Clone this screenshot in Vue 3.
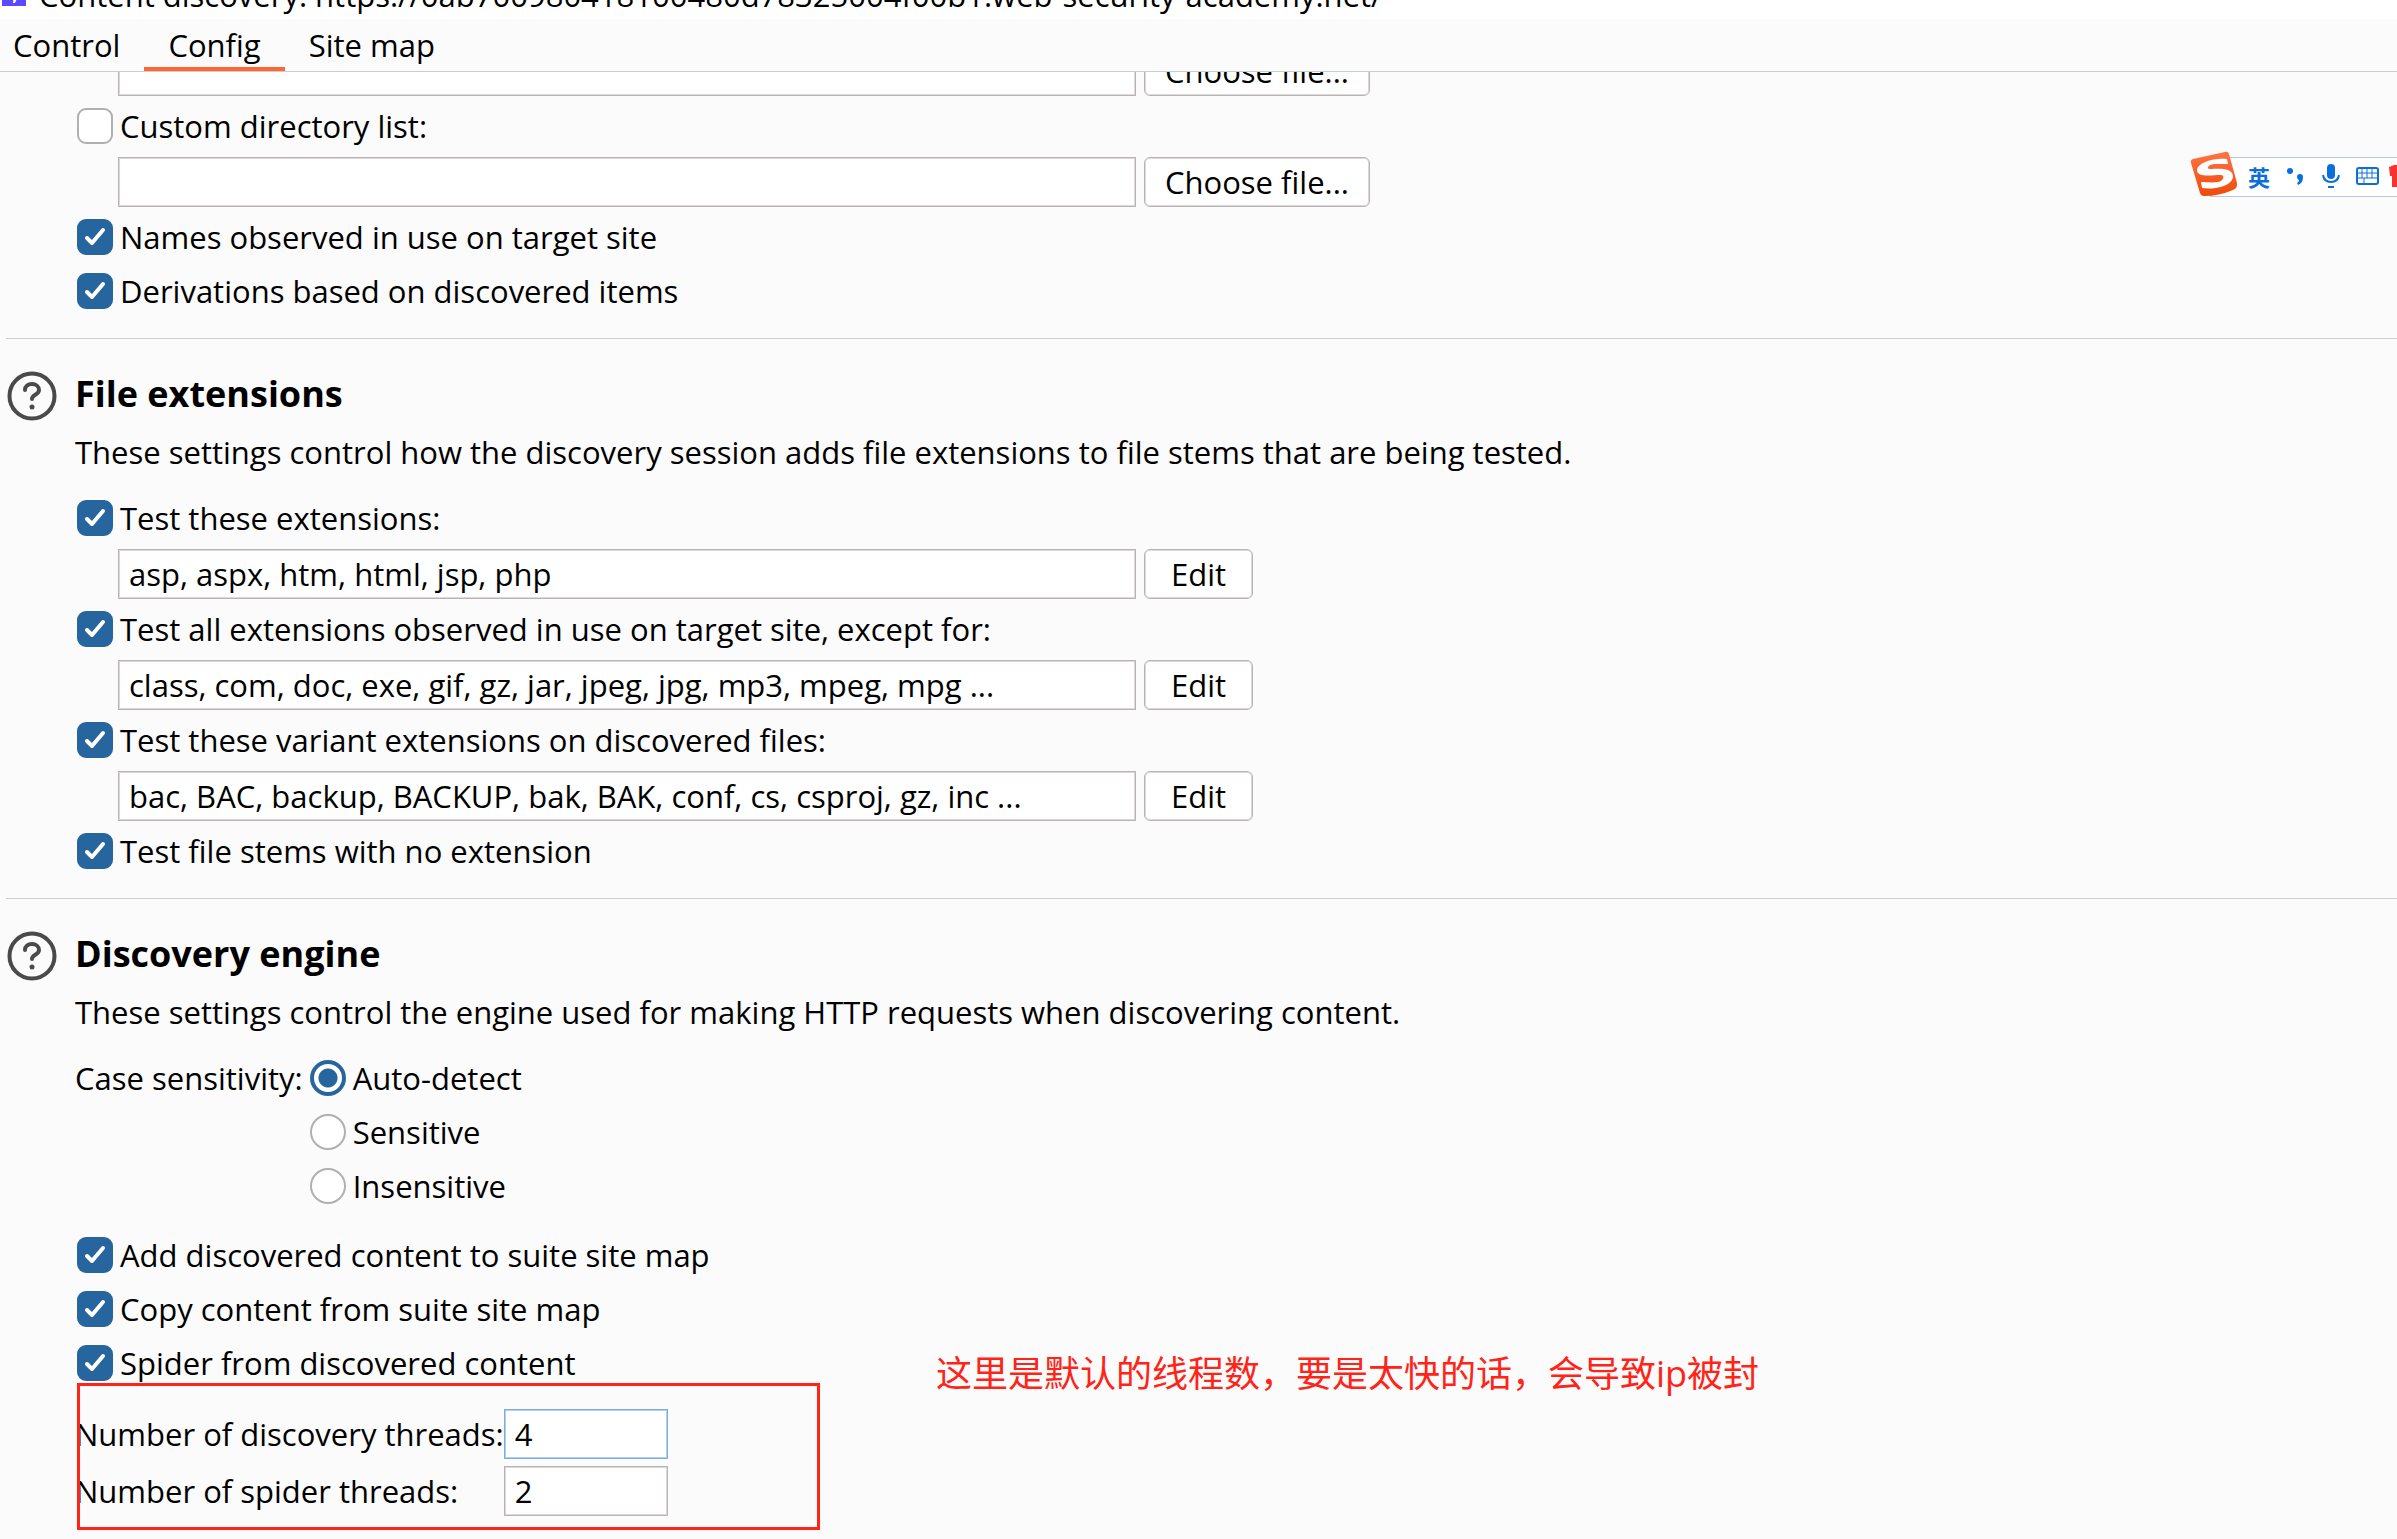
<template>
  <div class="window">
    <header class="title-bar">
      <svg width="24" height="22" viewBox="0 0 24 22">
        <rect width="24" height="22" fill="#5b4bff" />
        <path d="M14 2L7 11H12L11 19H13L17 10H13Z" fill="#ffffff" />
      </svg>
      <span class="title-text">{{ windowTitle }}</span>
    </header>

    <nav class="tabs">
      <button
        v-for="tab in tabs"
        :key="tab"
        type="button"
        class="tab"
        :class="{ active: tab === activeTab }"
        @click="activeTab = tab"
      >
        {{ tab }}
      </button>
    </nav>

    <main class="content">
      <!-- name sources -->
      <section class="sources">
        <div class="field-row">
          <input v-model="fileList" type="text" class="text-input wide" aria-label="Custom file list" />
          <button type="button" class="button">Choose file...</button>
        </div>
        <label class="choice">
          <input v-model="useDirectoryList" type="checkbox" class="checkbox" />
          <span>Custom directory list:</span>
        </label>
        <div class="field-row">
          <input
            v-model="directoryList"
            type="text"
            class="text-input wide"
            aria-label="Custom directory list"
          />
          <button type="button" class="button">Choose file...</button>
        </div>
        <label v-for="item in sources" :key="item.label" class="choice">
          <input v-model="item.checked" type="checkbox" class="checkbox" />
          <span>{{ item.label }}</span>
        </label>
      </section>

      <!-- file extensions -->
      <section class="section">
        <div class="section-header">
          <button type="button" class="help-button" aria-label="Help">
            <svg width="50" height="50" viewBox="0 0 50 50" fill="none" stroke="#4a4a4a">
              <circle cx="25" cy="25" r="22.5" stroke-width="4" />
              <path
                d="M18 19C18 15 21 13 25 13C29 13 32 15.500 32 19C32 24 25 23.500 25 28"
                stroke-width="4"
                stroke-linecap="round"
              />
              <circle cx="25" cy="36" r="2.500" fill="#4a4a4a" stroke="none" />
            </svg>
          </button>
          <h2 class="section-title">File extensions</h2>
        </div>
        <p class="description">
          These settings control how the discovery session adds file extensions to file stems that are
          being tested.
        </p>
        <template v-for="item in extensions" :key="item.label">
          <label class="choice">
            <input v-model="item.checked" type="checkbox" class="checkbox" />
            <span>{{ item.label }}</span>
          </label>
          <div v-if="item.value" class="field-row">
            <input v-model="item.value" type="text" class="text-input wide" :aria-label="item.label" />
            <button type="button" class="button edit">Edit</button>
          </div>
        </template>
      </section>

      <!-- discovery engine -->
      <section class="section">
        <div class="section-header">
          <button type="button" class="help-button" aria-label="Help">
            <svg width="50" height="50" viewBox="0 0 50 50" fill="none" stroke="#4a4a4a">
              <circle cx="25" cy="25" r="22.5" stroke-width="4" />
              <path
                d="M18 19C18 15 21 13 25 13C29 13 32 15.500 32 19C32 24 25 23.500 25 28"
                stroke-width="4"
                stroke-linecap="round"
              />
              <circle cx="25" cy="36" r="2.500" fill="#4a4a4a" stroke="none" />
            </svg>
          </button>
          <h2 class="section-title">Discovery engine</h2>
        </div>
        <p class="description">
          These settings control the engine used for making HTTP requests when discovering content.
        </p>
        <div class="case-group" role="radiogroup" aria-labelledby="case-label">
          <span id="case-label">Case sensitivity:</span>
          <div>
            <label v-for="option in caseOptions" :key="option" class="choice radio-choice">
              <input
                v-model="caseSensitivity"
                type="radio"
                name="case"
                class="radio"
                :value="option"
              />
              <span>{{ option }}</span>
            </label>
          </div>
        </div>
        <div class="engine-options">
          <label v-for="item in engineOptions" :key="item.label" class="choice">
            <input v-model="item.checked" type="checkbox" class="checkbox" />
            <span>{{ item.label }}</span>
          </label>
        </div>
        <div class="threads">
          <label for="discovery-threads" class="thread-label">Number of discovery threads:</label>
          <input
            id="discovery-threads"
            v-model="discoveryThreads"
            type="text"
            class="text-input focused"
          />
          <label for="spider-threads" class="thread-label">Number of spider threads:</label>
          <input id="spider-threads" v-model="spiderThreads" type="text" class="text-input" />
          <div class="highlight"></div>
          <p class="note">这里是默认的线程数，要是太快的话，会导致ip被封</p>
        </div>
      </section>
    </main>

    <!-- input method bar -->
    <aside class="ime">
      <svg width="48" height="46" viewBox="0 0 48 46">
        <defs>
          <linearGradient id="ime-orange" x1="0" y1="0" x2="0" y2="1">
            <stop offset="0" stop-color="#ff7444" />
            <stop offset="1" stop-color="#f04a0a" />
          </linearGradient>
        </defs>
        <path
          d="M3 8L35 1Q38 0 39 3L47 32Q48 37 43 39Q29 45 14 45Q11 45 10 42L1 12Q0 9 3 8Z"
          fill="url(#ime-orange)"
        />
        <path
          d="M37 8C22 7 8 12 7 19C7 27 22 24 31 24C35 24 34 30 28 31C22 32 16 31 11 31L12 37C28 39 43 34 43 25C42 16 28 18 20 18C16 18 18 13 25 13C30 13 34 13 38 13Z"
          fill="#ffffff"
        />
      </svg>
      <span class="ime-lang">英</span>
      <svg width="20" height="18" viewBox="0 0 20 18" fill="#0a6fdc">
        <circle cx="4" cy="4" r="3" />
        <path d="M11 10A3 3 0 1 1 17 10Q17 16 12 18L11 16Q13 15 13 13Q11 12 11 10Z" />
      </svg>
      <svg width="18" height="24" viewBox="0 0 18 24" fill="none" stroke="#0a6fdc" stroke-width="2">
        <rect x="5" y="0" width="8" height="15" rx="4" fill="#0a6fdc" stroke="none" />
        <path d="M1 11Q2 18 9 18Q16 18 17 11M6 23H12" />
      </svg>
      <svg width="23" height="18" viewBox="0 0 23 18" fill="none" stroke="#0a6fdc" stroke-width="2">
        <rect x="1" y="1" width="21" height="16" rx="2" />
        <path d="M2 6H21M2 11H21M6 2V11M11 2V11M16 2V11M8 11V16" stroke-width="1" />
      </svg>
      <svg width="8" height="24" viewBox="0 0 8 24">
        <path d="M0 3L5 1H8V23H3V12H1Z" fill="#f8322c" />
      </svg>
    </aside>
  </div>
</template>

<script setup>
import { ref } from "vue";

const windowTitle =
  "Content discovery: https://0ab700980418100480d78325004f00b1.web-security-academy.net/";

const tabs = ["Control", "Config", "Site map"];
const activeTab = ref("Config");

const fileList = ref("");
const useDirectoryList = ref(false);
const directoryList = ref("");

const sources = ref([
  { label: "Names observed in use on target site", checked: true },
  { label: "Derivations based on discovered items", checked: true },
]);

const extensions = ref([
  {
    label: "Test these extensions:",
    checked: true,
    value: "asp, aspx, htm, html, jsp, php",
  },
  {
    label: "Test all extensions observed in use on target site, except for:",
    checked: true,
    value: "class, com, doc, exe, gif, gz, jar, jpeg, jpg, mp3, mpeg, mpg ...",
  },
  {
    label: "Test these variant extensions on discovered files:",
    checked: true,
    value: "bac, BAC, backup, BACKUP, bak, BAK, conf, cs, csproj, gz, inc ...",
  },
  { label: "Test file stems with no extension", checked: true },
]);

const caseOptions = ["Auto-detect", "Sensitive", "Insensitive"];
const caseSensitivity = ref("Auto-detect");

const engineOptions = ref([
  { label: "Add discovered content to suite site map", checked: true },
  { label: "Copy content from suite site map", checked: true },
  { label: "Spider from discovered content", checked: true },
]);

const discoveryThreads = ref("4");
const spiderThreads = ref("2");
</script>

<style>
body {
  margin: 0;
  background: #fbfbfb;
}
</style>

<style scoped>
.window {
  position: relative;
  display: flex;
  flex-direction: column;
  height: 100vh;
  overflow: hidden;
  background: #fbfbfb;
  color: #000000;
  font-family: "Open Sans", "Noto Sans CJK SC", sans-serif;
  font-size: 31px;
  line-height: 54px;
}

input,
button {
  box-sizing: border-box;
  margin: 0;
  color: inherit;
  font: inherit;
}

.title-bar {
  display: flex;
  flex-shrink: 0;
  align-items: center;
  gap: 13px;
  height: 48px;
  margin-top: -29px;
  padding-left: 2px;
  background: #ffffff;
  white-space: nowrap;
}

.tabs {
  display: flex;
  flex-shrink: 0;
  height: 53px;
  box-sizing: border-box;
  border-bottom: 1px solid #c8cfcf;
}

.tab {
  padding: 4px 24px 0;
  border: none;
  border-bottom: 4px solid transparent;
  background: none;
  line-height: 44px;
}

.tab:first-child {
  padding-left: 13px;
}

.tab.active {
  border-bottom-color: #ff6633;
}

.content {
  flex: 1;
  min-height: 0;
  overflow: hidden;
  padding-left: 6px;
}

.sources {
  margin-top: -30px;
  padding-bottom: 20px;
}

.section {
  padding: 28px 0 20px;
  border-top: 1px solid #d0d0d0;
}

.section-header {
  display: flex;
  align-items: center;
  height: 58px;
  gap: 18px;
}

.help-button {
  width: 50px;
  height: 50px;
  margin-left: 1px;
  padding: 0;
  border: none;
  background: none;
  cursor: pointer;
}

.help-button svg {
  display: block;
}

.section-title {
  margin: 0 0 4px;
  font-size: 36px;
  font-weight: 700;
}

.description {
  margin: 0 0 12px;
  padding-left: 69px;
}

.choice {
  display: flex;
  align-items: center;
  gap: 7px;
  width: fit-content;
  height: 54px;
  margin-left: 71px;
}

.checkbox,
.radio {
  appearance: none;
  flex-shrink: 0;
  width: 36px;
  height: 36px;
  border: 2px solid #b0b0b0;
  background: #ffffff;
}

.checkbox {
  border-radius: 9px;
}

.checkbox:checked {
  border-color: #27659f;
  background: #27659f
    url("data:image/svg+xml,%3Csvg xmlns='http://www.w3.org/2000/svg' viewBox='0 0 32 32' fill='none' stroke='white' stroke-width='4' stroke-linecap='round' stroke-linejoin='round'%3E%3Cpath d='M8 17L13 22L24 9'/%3E%3C/svg%3E")
    center / 32px 32px no-repeat;
}

.radio {
  border-radius: 50%;
}

.radio:checked {
  border: 4px solid #27659f;
  background: radial-gradient(circle, #27659f 9px, #ffffff 10px);
}

.field-row {
  display: flex;
  gap: 8px;
  padding: 4px 0 3px 112px;
}

.text-input {
  height: 50px;
  padding: 0 10px;
  border: 1px solid #b9b3b6;
  border-radius: 0;
  background: #ffffff;
  box-shadow: inset 0 0 0 1px #ddd9db;
  outline: none;
}

.text-input.wide {
  width: 1018px;
}

.text-input.focused {
  border-color: #7eabdd;
  box-shadow: inset 0 0 0 1px #b4d0ee;
}

.button {
  height: 50px;
  padding: 0 20px;
  border: 1px solid #b9b3b6;
  border-radius: 6px;
  background: #ffffff;
  box-shadow: inset 0 0 0 1px #ddd9db;
  line-height: 40px;
}

.button.edit {
  padding: 0 26px;
}

.case-group {
  display: flex;
  gap: 7px;
  padding-left: 69px;
}

.radio-choice {
  margin-left: 0;
}

.engine-options {
  margin-top: 15px;
}

.threads {
  position: relative;
  display: grid;
  grid-template-columns: max-content 164px;
  row-gap: 7px;
  margin-top: 19px;
  padding-left: 69px;
}

.thread-label {
  line-height: 50px;
}

.highlight {
  position: absolute;
  top: -26px;
  bottom: -14px;
  left: 71px;
  width: 737px;
  border: 3px solid #ff2318;
  pointer-events: none;
}

.note {
  position: absolute;
  top: -62px;
  left: 930px;
  margin: 0;
  color: #ff2318;
  font-size: 36px;
  white-space: nowrap;
}

.ime {
  position: absolute;
  top: 151px;
  right: 0;
  display: flex;
  align-items: center;
  gap: 16px;
  height: 46px;
}

.ime::before {
  content: "";
  position: absolute;
  top: 6px;
  right: 0;
  bottom: 0;
  left: 20px;
  box-sizing: border-box;
  border: 1px solid #b9c9dd;
  border-right: none;
  background: #ffffff;
}

.ime > * {
  position: relative;
  margin-top: 4px;
}

.ime svg:first-child {
  margin-top: 0;
}

.ime-lang {
  margin-left: -6px;
  color: #0a6fdc;
  font-family: "Noto Sans CJK SC", sans-serif;
  font-size: 22px;
  font-weight: 700;
}

.ime svg:last-child {
  margin-left: -6px;
}
</style>
